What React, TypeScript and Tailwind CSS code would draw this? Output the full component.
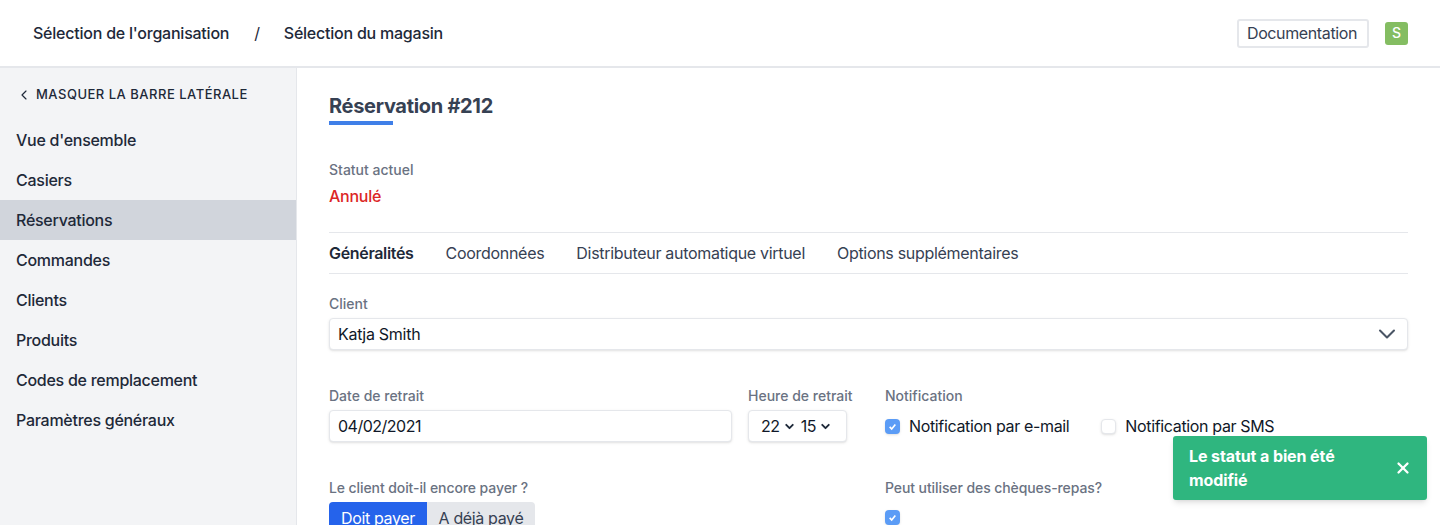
import React from "react";
import { ChevronDown, ChevronLeft, X } from "lucide-react";

const navItems = [
  "Vue d'ensemble",
  "Casiers",
  "Réservations",
  "Commandes",
  "Clients",
  "Produits",
  "Codes de remplacement",
  "Paramètres généraux",
];

const tabs = ["Généralités", "Coordonnées", "Distributeur automatique virtuel", "Options supplémentaires"];

const Check = ({ checked }: { checked: boolean }) => (
  <span
    className={
      checked
        ? "flex h-[15px] w-[15px] shrink-0 items-center justify-center rounded-[4px] bg-[#5b9cf6] shadow-sm"
        : "block h-[15px] w-[15px] shrink-0 rounded-[4px] border border-gray-200 bg-white shadow-sm"
    }
  >
    {checked && (
      <svg viewBox="0 0 16 16" className="h-[13px] w-[13px]" fill="none" stroke="white" strokeWidth="2">
        <path d="M4.5 8.5 7 11l4.5-5.5" />
      </svg>
    )}
  </span>
);

const Label = ({ children }: { children: React.ReactNode }) => (
  <div className="text-sm leading-5 font-medium text-gray-500">{children}</div>
);

export default function App() {
  return (
    <div className="relative h-[525px] w-[1440px] overflow-hidden bg-white font-['Inter',sans-serif] text-gray-900">
      <header className="flex h-[68px] items-center justify-between border-b-2 border-gray-200 pr-8 pl-[33px]">
        <div className="flex items-center text-base font-medium tracking-[-0.23px] text-gray-800">
          <span>Sélection de l'organisation</span>
          <span className="mr-6 ml-[25px] font-normal">/</span>
          <span>Sélection du magasin</span>
        </div>
        <div className="flex items-center gap-4">
          <button className="h-[29px] w-[132px] rounded-[3px] border-2 border-gray-200 pr-[2px] text-base leading-5 tracking-[-0.38px] text-gray-700">
            Documentation
          </button>
          <div className="flex h-[23px] w-[23px] items-center justify-center rounded-[3px] bg-[#84bd62] text-sm font-medium text-white">
            S
          </div>
        </div>
      </header>

      <div className="flex">
        <aside className="h-[457px] w-[297px] shrink-0 border-r border-gray-200 bg-gray-100">
          <div className="flex h-[52px] items-center gap-1 pt-[1px] pl-[16px] text-[13px] font-medium tracking-[0.5px] text-gray-800 uppercase">
            <ChevronLeft size={16} strokeWidth={1.75} />
            <span>Masquer la barre latérale</span>
          </div>
          <nav>
            {navItems.map((item) => (
              <div
                key={item}
                className={`flex h-10 items-center pl-4 text-base font-medium tracking-[-0.27px] text-gray-800 ${
                  item === "Réservations" ? "bg-gray-300" : ""
                }`}
              >
                {item}
              </div>
            ))}
          </nav>
        </aside>

        <main className="min-w-0 flex-1 pt-[24px] pr-8 pl-8">
          <h1 className="text-xl leading-7 font-bold tracking-[-0.3px] text-gray-700">Réservation #212</h1>
          <div className="mt-[1px] h-1 w-16 bg-[#3f7fe8]" />

          <div className="mt-[35px]">
            <Label>Statut actuel</Label>
            <div className="mt-1 text-base leading-6 font-medium tracking-[-0.25px] text-[#dc2626]">Annulé</div>
          </div>

          <div className="mt-[24px] flex h-[42px] items-center gap-8 border-y border-gray-200 tracking-[-0.3px]">
            {tabs.map((tab, i) => (
              <span
                key={tab}
                className={i === 0 ? "text-base font-semibold tracking-[-0.33px] text-gray-800" : "text-base font-normal text-gray-700"}
              >
                {tab}
              </span>
            ))}
          </div>

          <div className="mt-[20px]">
            <Label>Client</Label>
            <div className="mt-1 flex h-[32px] items-center justify-between rounded border border-gray-200 bg-white pr-[6px] pl-2 shadow-sm">
              <span className="text-base tracking-[-0.27px]">Katja Smith</span>
              <ChevronDown size={28} strokeWidth={1.75} className="text-gray-600" />
            </div>
          </div>

          <div className="mt-[36px] flex">
            <div className="w-[403px]">
              <Label>Date de retrait</Label>
              <div className="mt-1 flex h-[32px] items-center rounded border border-gray-200 bg-white pl-2 text-base tracking-[-0.5px] shadow-sm">
                04/02/2021
              </div>
            </div>
            <div className="ml-4 w-[137px]">
              <Label>Heure de retrait</Label>
              <div className="mt-1 flex h-[32px] w-[99px] items-center justify-center gap-[3px] rounded border border-gray-200 bg-white pr-[2px] text-base tracking-[-0.4px] shadow-sm">
                <span>22</span>
                <ChevronDown size={13} strokeWidth={3.5} className="text-gray-800" />
                <span className="ml-[2px]">15</span>
                <ChevronDown size={13} strokeWidth={3.5} className="text-gray-800" />
              </div>
            </div>
            <div>
              <Label>Notification</Label>
              <div className="mt-1 flex h-[32px] items-center tracking-[-0.35px]">
                <Check checked />
                <span className="ml-[9px] text-base">Notification par e-mail</span>
                <span className="ml-8">
                  <Check checked={false} />
                </span>
                <span className="ml-[9px] text-base">Notification par SMS</span>
              </div>
            </div>
          </div>

          <div className="mt-[36px] flex tracking-[-0.09px]">
            <div className="w-[556px]">
              <Label>Le client doit-il encore payer ?</Label>
              <div className="mt-1 flex tracking-[-0.35px]">
                <button className="h-8 w-[98px] rounded-l bg-[#2563eb] text-base text-white">Doit payer</button>
                <button className="h-8 w-[108px] rounded-r bg-gray-200 text-base text-gray-700">A déjà payé</button>
              </div>
            </div>
            <div>
              <Label>Peut utiliser des chèques-repas?</Label>
              <div className="mt-[12px]">
                <Check checked />
              </div>
            </div>
          </div>
        </main>
      </div>

      <div className="absolute top-[436px] left-[1173px] flex h-[64px] w-[254px] items-center justify-between rounded-[3px] bg-[#2fb67f] pr-[15px] pl-4 text-white shadow-md">
        <span className="w-[170px] text-base leading-6 font-bold tracking-[-0.1px]">Le statut a bien été modifié</span>
        <X size={18} strokeWidth={3} />
      </div>
    </div>
  );
}
